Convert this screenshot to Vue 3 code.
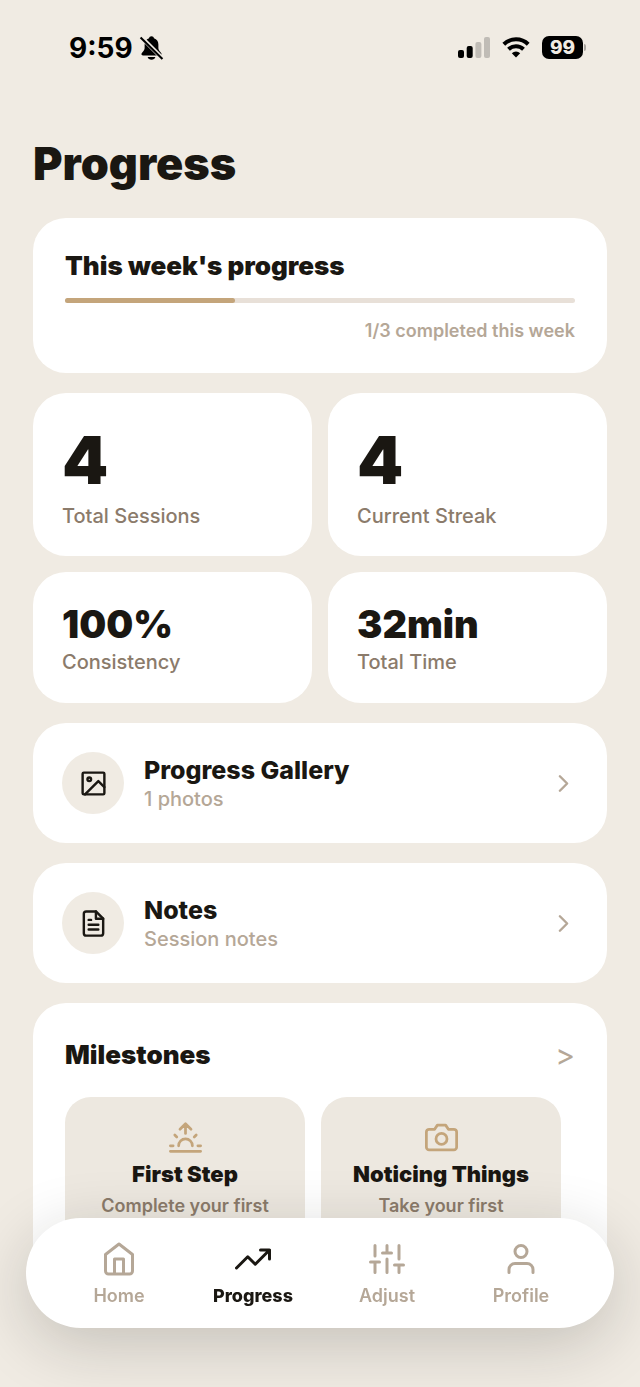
<script setup>
import { ref } from 'vue'

// --- DATA ---
const completed = ref(1)
const goal = ref(3)

const stats = ref([
  { label: 'Total Sessions', value: '4', big: true },
  { label: 'Current Streak', value: '4', big: true },
  { label: 'Consistency', value: '100%', big: false },
  { label: 'Total Time', value: '32min', big: false }
])

const links = ref([
  { id: 'gallery', title: 'Progress Gallery', sub: '1 photos' },
  { id: 'notes', title: 'Notes', sub: 'Session notes' }
])

const milestones = ref([
  { id: 'sunrise', title: 'First Step', text: 'Complete your first session' },
  { id: 'camera', title: 'Noticing Things', text: 'Take your first progress photo' }
])

const tabs = ['Home', 'Progress', 'Adjust', 'Profile']
const activeTab = ref('Progress')
</script>

<template>
  <div class="app">
    <div class="status-bar">
      <div class="status-left">
        <span class="time">9:59</span>
        <svg class="bell" viewBox="0 0 24 24">
          <path d="M12 1.2c1.3 0 2.2.8 2.4 1.9 2.7.9 4.2 3 4.2 6v3.4c0 1.500.7 2.500 1.900 3.700.8.8 1.200 1.400 1.200 2.100 0 .8-.6 1.300-1.500 1.300H3.800c-.9 0-1.500-.5-1.500-1.300 0-.7.4-1.300 1.200-2.100 1.200-1.200 1.900-2.200 1.900-3.700V9.100c0-3 1.500-5.100 4.200-6 .2-1.100 1.100-1.900 2.400-1.900z" />
          <path d="M8.300 21.200h7.400c-.4 1.700-1.900 2.600-3.700 2.600s-3.300-.9-3.700-2.600z" />
          <path class="bell-gap" d="M1.500 1.500l22 22" />
          <path class="bell-slash" d="M1.500 2.500l21 20.500" />
        </svg>
      </div>
      <div class="status-right">
        <svg class="signal" viewBox="0 0 32 21">
          <rect x="0" y="13" width="6" height="8" rx="2" />
          <rect x="8.700" y="9" width="6" height="12" rx="2" />
          <rect class="off" x="17.400" y="5" width="6" height="16" rx="2" />
          <rect class="off" x="26" y="0" width="6" height="21" rx="2" />
        </svg>
        <svg class="wifi" viewBox="0 0 28 21">
          <path d="M1.800 7.300a17.500 17.500 0 0 1 24.400 0" />
          <path d="M6.500 12.200a10.800 10.800 0 0 1 15 0" />
          <path class="dot" d="M14 20.500l-4.200-4.200a6 6 0 0 1 8.400 0z" />
        </svg>
        <div class="battery">
          <span class="level">99</span>
          <span class="cap"></span>
        </div>
      </div>
    </div>

    <main class="content">
      <h1>Progress</h1>

      <section class="card week">
        <h2>This week's progress</h2>
        <div class="track">
          <div class="fill" :style="{ width: (completed / goal) * 100 + '%' }"></div>
        </div>
        <p>{{ completed }}/{{ goal }} completed this week</p>
      </section>

      <section class="stats">
        <div v-for="s in stats" :key="s.label" :class="['card', 'stat', { big: s.big }]">
          <strong>{{ s.value }}</strong>
          <span>{{ s.label }}</span>
        </div>
      </section>

      <a v-for="l in links" :key="l.id" :href="'#' + l.id" class="card row-link">
        <span class="circle">
          <svg v-if="l.id === 'gallery'" class="icon" viewBox="0 0 24 24">
            <rect x="3" y="3" width="18" height="18" rx="1" />
            <circle cx="8.500" cy="8.500" r="1.500" />
            <path d="M21 15l-5-5L5 21" />
          </svg>
          <svg v-else class="icon" viewBox="0 0 24 24">
            <path d="M14 2H6a2 2 0 0 0-2 2v16a2 2 0 0 0 2 2h12a2 2 0 0 0 2-2V8z" />
            <path d="M14 2v6h6M16 13H8M16 17H8M10 9H8" />
          </svg>
        </span>
        <span class="row-text">
          <b>{{ l.title }}</b>
          <small>{{ l.sub }}</small>
        </span>
        <svg class="icon chevron" viewBox="0 0 24 24"><path d="M9 18l6-6-6-6" /></svg>
      </a>

      <section class="card milestones">
        <header>
          <h2>Milestones</h2>
          <a href="#milestones" class="more">&gt;</a>
        </header>
        <div class="milestone-list">
          <article v-for="m in milestones" :key="m.id" class="milestone">
            <svg v-if="m.id === 'sunrise'" class="icon" viewBox="0 0 24 24">
              <path d="M17 18a5 5 0 0 0-10 0M12 2v7M4.220 10.220l1.420 1.420M1 18h2M21 18h2M18.360 11.640l1.420-1.420M23 22H1M8 6l4-4 4 4" />
            </svg>
            <svg v-else class="icon" viewBox="0 0 24 24">
              <path d="M23 19a2 2 0 0 1-2 2H3a2 2 0 0 1-2-2V8a2 2 0 0 1 2-2h4l2-3h6l2 3h4a2 2 0 0 1 2 2z" />
              <circle cx="12" cy="13" r="4" />
            </svg>
            <h3>{{ m.title }}</h3>
            <p>{{ m.text }}</p>
          </article>
        </div>
      </section>
    </main>

    <nav class="tab-bar">
      <button
        v-for="t in tabs"
        :key="t"
        type="button"
        :class="{ active: t === activeTab }"
        @click="activeTab = t"
      >
        <svg class="icon" viewBox="0 0 24 24">
          <path v-if="t === 'Home'" d="M3 9l9-7 9 7v11a2 2 0 0 1-2 2H5a2 2 0 0 1-2-2zM9 22V12h6v10" />
          <path v-else-if="t === 'Progress'" d="M23 6l-9.500 9.500-5-5L1 18M17 6h6v6" />
          <path v-else-if="t === 'Adjust'" d="M4 21v-7M4 10V3M12 21v-9M12 8V3M20 21v-5M20 12V3M1 14h6M9 8h6M17 16h6" />
          <path v-else d="M20 21v-2a4 4 0 0 0-4-4H8a4 4 0 0 0-4 4v2M12 3a4 4 0 1 0 0 8 4 4 0 0 0 0-8z" />
        </svg>
        <span>{{ t }}</span>
      </button>
    </nav>
  </div>
</template>

<style>
body {
  margin: 0;
  background: #f0ebe3;
}
</style>

<style scoped>
/* GENERAL STYLES */
.app {
  min-height: 100vh;
  box-sizing: border-box;
  background: #f0ebe3;
  color: #1a1712;
  font-family: Inter, 'Liberation Sans', sans-serif;
}

h1, h2, h3, p {
  margin: 0;
}

a {
  color: inherit;
  text-decoration: none;
}

.icon {
  display: block;
  fill: none;
  stroke: currentColor;
  stroke-width: 2;
  stroke-linecap: round;
  stroke-linejoin: round;
}

/* STATUS BAR */
.status-bar {
  display: flex;
  justify-content: space-between;
  align-items: center;
  height: 95px;
  padding: 0 54px 0 69px;
  color: #000;
}

.status-left, .status-right {
  display: flex;
  align-items: center;
}

.status-left {
  gap: 6px;
}

.time {
  font-size: 28px;
  font-weight: 700;
}

.bell {
  width: 25px;
  height: 25px;
}

.bell-gap {
  stroke: #f0ebe3;
  stroke-width: 4;
}

.bell-slash {
  stroke: #000;
  stroke-width: 2;
}

.status-right {
  gap: 12px;
}

.signal {
  width: 32px;
  height: 21px;
}

.signal .off {
  fill: #c0bcb6;
}

.wifi {
  width: 28px;
  height: 21px;
  fill: none;
  stroke: #000;
  stroke-width: 4;
}

.wifi .dot {
  fill: #000;
  stroke: none;
}

.battery {
  display: flex;
  align-items: center;
  gap: 1px;
}

.level {
  width: 41px;
  border-radius: 7px;
  background: #000;
  color: #f0ebe3;
  font-size: 19px;
  font-weight: 800;
  line-height: 23px;
  text-align: center;
}

.cap {
  width: 2px;
  height: 7px;
  border-radius: 0 2px 2px 0;
  background: #aaa6a0;
}

/* CONTENT */
.content {
  display: flex;
  flex-direction: column;
  gap: 20px;
  padding: 41px 33px 90px;
}

h1 {
  font-size: 45px;
  font-weight: 900;
  line-height: 56px;
  margin-bottom: 6px;
}

h2 {
  font-size: 26px;
  font-weight: 900;
  line-height: 32px;
}

.card {
  border-radius: 33px;
  background: #fff;
}

.week {
  padding: 32px 32px 31px;
}

.track {
  height: 5px;
  margin: 16px 0 17px;
  border-radius: 3px;
  background: #e8e0d8;
}

.fill {
  height: 100%;
  border-radius: 3px;
  background: #c4a57b;
}

.week p {
  color: #b5a797;
  font-size: 18px;
  font-weight: 600;
  line-height: 22px;
  text-align: right;
}

/* STATS */
.stats {
  display: grid;
  grid-template-columns: 1fr 1fr;
  gap: 16px;
}

.stat {
  display: flex;
  flex-direction: column;
  padding: 32px 29px 29px;
}

.stat strong {
  font-size: 38px;
  font-weight: 900;
  line-height: 40px;
  margin-bottom: 6px;
}

.stat span {
  color: #8b7b6b;
  font-size: 20px;
  font-weight: 500;
  line-height: 24px;
}

.stat.big {
  padding-bottom: 28px;
}

.stat.big strong {
  font-size: 66px;
  line-height: 71px;
  margin-bottom: 8px;
}

/* LINKS */
.row-link {
  display: flex;
  align-items: center;
  gap: 20px;
  padding: 29px;
}

.circle {
  display: grid;
  place-items: center;
  width: 62px;
  height: 62px;
  border-radius: 50%;
  background: #f0ebe3;
}

.circle .icon {
  width: 29px;
  height: 29px;
}

.row-text {
  display: flex;
  flex: 1;
  flex-direction: column;
  gap: 2px;
}

.row-text b {
  font-size: 25px;
  font-weight: 800;
  line-height: 30px;
}

.row-text small {
  color: #b5a797;
  font-size: 20px;
  font-weight: 500;
  line-height: 24px;
}

.chevron {
  width: 29px;
  height: 29px;
  color: #b5a797;
}

/* MILESTONES */
.milestones {
  padding: 33px 32px;
}

.milestones header {
  display: flex;
  justify-content: space-between;
  align-items: center;
  margin-bottom: 23px;
}

.more {
  color: #b5a797;
  font-size: 30px;
  line-height: 38px;
}

.milestone-list {
  display: flex;
  gap: 16px;
  overflow-x: auto;
}

.milestone {
  display: flex;
  flex: none;
  flex-direction: column;
  align-items: center;
  width: 240px;
  box-sizing: border-box;
  padding: 24px 26px 16px;
  border-radius: 26px;
  background: #ede8e0;
  text-align: center;
}

.milestone .icon {
  width: 33px;
  height: 33px;
  color: #c4a57b;
}

.milestone h3 {
  margin: 6px 0;
  font-size: 22px;
  font-weight: 900;
  line-height: 28px;
  white-space: nowrap;
}

.milestone p {
  color: #8b7b6b;
  font-size: 18px;
  font-weight: 600;
  line-height: 24px;
}

/* TAB BAR */
.tab-bar {
  position: fixed;
  right: 26px;
  bottom: 59px;
  left: 26px;
  display: flex;
  box-sizing: border-box;
  padding: 23px 26px 21px;
  border-radius: 56px;
  background: #fff;
  box-shadow: 0 16px 65px rgba(26, 23, 18, 0.2);
}

.tab-bar button {
  display: flex;
  flex: 1;
  flex-direction: column;
  align-items: center;
  gap: 8px;
  padding: 0;
  border: 0;
  background: none;
  color: #b5a797;
  font-family: inherit;
  font-size: 18px;
  font-weight: 600;
  line-height: 22px;
  cursor: pointer;
}

.tab-bar .icon {
  width: 36px;
  height: 36px;
}

.tab-bar .active {
  color: #1a1712;
  font-weight: 800;
}
</style>
